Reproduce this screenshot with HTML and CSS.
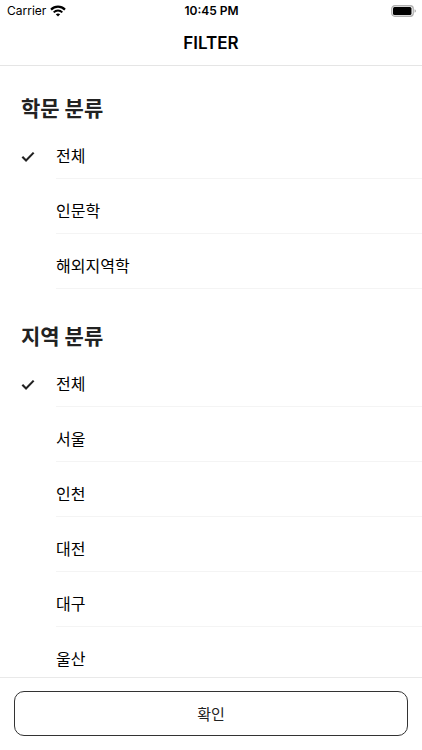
FILE: index.html
```html
<!DOCTYPE html>
<html lang="ko">
<head>
    <meta charset="UTF-8">
    <meta name="viewport" content="width=device-width, initial-scale=1">
    <title>FILTER</title>
    <link rel="stylesheet" href="styles.css">
</head>
<body>
    <div class="status-bar">
        <div class="carrier">
            <span>Carrier</span>
            <svg class="wifi" viewBox="0 0 16 12" aria-hidden="true">
                <path d="M1 4.6C5 .6 11 .6 15 4.6" fill="none" stroke="#000" stroke-width="2.2"/>
                <path d="M3.7 7.4C6.1 5 9.9 5 12.3 7.4" fill="none" stroke="#000" stroke-width="2"/>
                <path d="M5.8 9.2C7 8.1 9 8.1 10.2 9.2L8 11.4Z"/>
            </svg>
        </div>
        <span class="time">10:45 PM</span>
        <svg class="battery" viewBox="0 0 25 12" aria-hidden="true">
            <rect x=".75" y=".75" width="21.5" height="10.5" rx="3" fill="#fff" stroke="#b0b0b0" stroke-width="1.3"/>
            <rect x="2" y="2" width="18.5" height="8" rx="1.5"/>
            <path d="M23.7 4.2C25 4.8 25 7.2 23.7 7.8Z" fill="#888"/>
        </svg>
    </div>
    <header class="header">
        <h1>FILTER</h1>
    </header>
    <form class="filter-form">
        <main class="filters">
            <section class="filter-group">
                <h2>학문 분류</h2>
                <label class="option">
                    <input type="radio" name="field" value="all" checked>
                    <span>전체</span>
                </label>
                <label class="option">
                    <input type="radio" name="field" value="humanities">
                    <span>인문학</span>
                </label>
                <label class="option">
                    <input type="radio" name="field" value="area-studies">
                    <span>해외지역학</span>
                </label>
            </section>
            <section class="filter-group">
                <h2>지역 분류</h2>
                <label class="option">
                    <input type="radio" name="region" value="all" checked>
                    <span>전체</span>
                </label>
                <label class="option">
                    <input type="radio" name="region" value="seoul">
                    <span>서울</span>
                </label>
                <label class="option">
                    <input type="radio" name="region" value="incheon">
                    <span>인천</span>
                </label>
                <label class="option">
                    <input type="radio" name="region" value="daejeon">
                    <span>대전</span>
                </label>
                <label class="option">
                    <input type="radio" name="region" value="daegu">
                    <span>대구</span>
                </label>
                <label class="option">
                    <input type="radio" name="region" value="ulsan">
                    <span>울산</span>
                </label>
            </section>
        </main>
        <footer class="footer">
            <button type="submit">확인</button>
        </footer>
    </form>
</body>
</html>
```
FILE: styles.css
```css
* {
    box-sizing: border-box;
}
body {
    font-family: Inter, "Noto Sans CJK KR", sans-serif;
    background-color: #fff;
    color: #000;
    margin: 0;
    display: flex;
    flex-direction: column;
    height: 100vh;
}
.status-bar {
    display: grid;
    grid-template-columns: 1fr auto 1fr;
    align-items: center;
    height: 21px;
    padding: 0 6px 0 7px;
    font-size: 12px;
}
.carrier {
    display: flex;
    align-items: center;
    gap: 4px;
}
.wifi {
    width: 16px;
    height: 12px;
}
.time {
    font-weight: 600;
}
.battery {
    width: 25px;
    height: 12px;
    justify-self: end;
}
.header {
    display: flex;
    justify-content: center;
    align-items: center;
    height: 45px;
    border-bottom: 1px solid #e5e5e5;
}
.header h1 {
    margin: 0;
    font-size: 17px;
    line-height: 20px;
    font-weight: 600;
}
.filter-form {
    display: flex;
    flex-direction: column;
    flex: 1;
    min-height: 0;
}
.filters {
    flex: 1;
    min-height: 0;
    overflow-y: auto;
    scrollbar-width: none;
}
.filter-group {
    padding: 28px 0 5px 21px;
}
.filter-group h2 {
    margin: 0;
    font-size: 21px;
    line-height: 30px;
    font-weight: 700;
    color: #222;
}
.option {
    display: grid;
    grid-template-columns: 35px 1fr;
    cursor: pointer;
}
.option span {
    padding: 20px 0 10px;
    font-size: 16px;
    line-height: 24px;
    border-bottom: 1px solid #f4f4f4;
}
.option input {
    appearance: none;
    width: 14px;
    height: 14px;
    margin: 26px 0 0;
}
.option input:checked {
    background-color: #222;
    clip-path: polygon(4% 54%, 15% 43%, 36% 64%, 85% 14%, 96% 24%, 36% 85%);
}
.footer {
    padding: 13px 14px 14px;
    border-top: 1px solid #e9e9e9;
}
.footer button {
    width: 100%;
    height: 45px;
    font-family: inherit;
    font-size: 15px;
    color: #222;
    background-color: #fff;
    border: 1px solid #333;
    border-radius: 10px;
    cursor: pointer;
}
```
